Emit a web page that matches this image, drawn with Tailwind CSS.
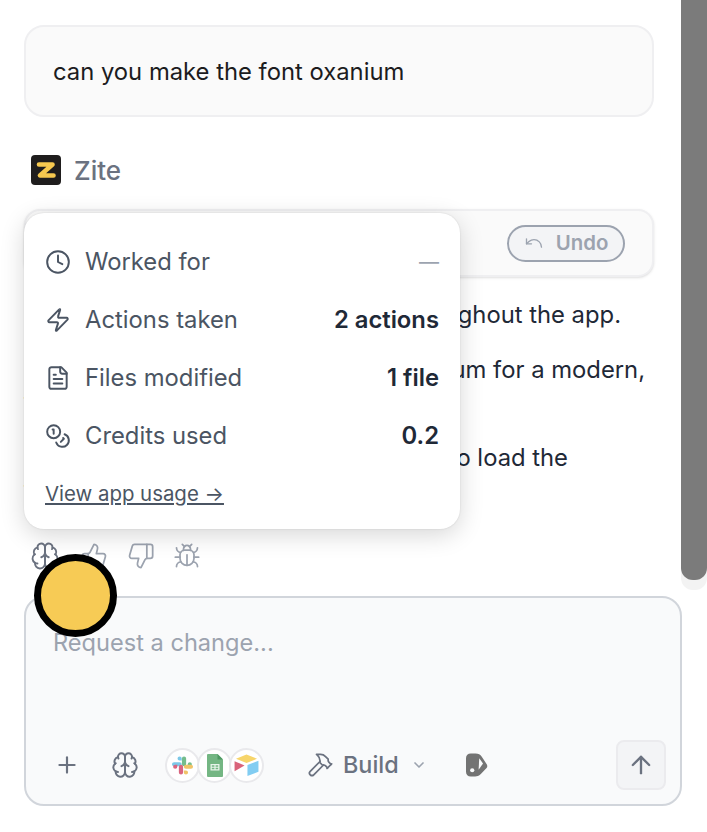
<!DOCTYPE html>
<html>
<head>
<meta charset="utf-8">
<script src="https://cdn.jsdelivr.net/npm/@tailwindcss/browser@4"></script>
</head>
<body class="bg-white">
<div class="relative h-[832px] w-[707px] overflow-hidden bg-white font-['Inter',sans-serif]">
  <!-- scrollbar -->
  <div class="absolute right-0 top-0 h-[590px] w-[26px] rounded-b-[12px] bg-[#f3f3f3]">
    <div class="h-[580px] w-full rounded-b-[12px] bg-[#7b7b7b]"></div>
  </div>

  <div class="flex flex-col pl-[24px] pt-[25px]">
    <div class="flex h-[92px] w-[630px] items-center rounded-[20px] border-2 border-[#efeff1] bg-[#fafafa] px-[27px] pt-[2px] text-[23.8px] text-[#1c1c1e]">can you make the font oxanium</div>

    <div class="mt-[38px] flex h-[30px] items-center gap-[13px] pl-[7px]">
      <svg width="30" height="30" viewBox="0 0 30 30"><rect width="30" height="30" rx="4" fill="#1f1d1d"/><path d="M8 9.500h13.500L9 20.500h13.500" fill="none" stroke="#f7c94f" stroke-width="4.600" stroke-linecap="round" stroke-linejoin="round"/></svg>
      <span class="text-[26px] font-medium text-[#6b7280]">Zite</span>
    </div>

    <div class="mt-[24px] flex h-[68px] w-[630px] items-center justify-end rounded-[16px] border-2 border-[#efeff1] bg-[#fafafa] pr-[27px] shadow-sm">
      <div class="flex h-[37px] w-[118px] items-center justify-center gap-[12px] rounded-full border-2 border-[#9ca3af] bg-[#f3f4f6] text-[20.4px] font-semibold text-[#9ca3af]">
        <svg width="20" height="20" viewBox="0 0 24 24" fill="none" stroke="#9ca3af" stroke-width="1.600" stroke-linecap="round" stroke-linejoin="round"><path d="M3 7v6h6"/><path d="M21 17a9 9 0 0 0-9-9 9 9 0 0 0-6 2.300L3 13"/></svg>
        <span>Undo</span>
      </div>
    </div>

    <div class="mt-[22px] h-[240px] whitespace-nowrap text-[23.8px] leading-[32px] text-[#1f2937]">
      <p class="w-[597px] text-right">Updated the font to Oxanium throughout the app.</p>
      <p class="mt-[23px] w-[621px] text-right">Changed the main font to Oxanium for a modern,</p>
      <p>tech look.</p>
      <p class="mt-[24px] w-[544px] text-right">Added the Google Fonts link to load the</p>
      <p>font.</p>
    </div>

    <div class="mt-[2px] flex h-[30px] items-center gap-[20px] pl-[6px] text-[#9ca3af]">
      <svg width="30" height="30" viewBox="0 0 24 24" fill="none" stroke="currentColor" stroke-width="1.500" stroke-linecap="round" stroke-linejoin="round" class="text-[#6b7280]"><path d="M12 5a3 3 0 1 0-5.997.125 4 4 0 0 0-2.526 5.770 4 4 0 0 0 .556 6.588A4 4 0 1 0 12 18Z"/><path d="M12 5a3 3 0 1 1 5.997.125 4 4 0 0 1 2.526 5.770 4 4 0 0 1-.556 6.588A4 4 0 1 1 12 18Z"/><path d="M15 13a4.500 4.500 0 0 1-3-4 4.500 4.500 0 0 1-3 4"/><path d="M17.599 6.500a3 3 0 0 0 .399-1.375"/><path d="M6.003 5.125A3 3 0 0 0 6.401 6.500"/><path d="M3.477 10.896a4 4 0 0 1 .585-.396"/><path d="M19.938 10.500a4 4 0 0 1 .585.396"/><path d="M6 18a4 4 0 0 1-1.967-.516"/><path d="M19.967 17.484A4 4 0 0 1 18 18"/></svg>
      <svg width="28" height="28" viewBox="0 0 24 24" fill="none" stroke="currentColor" stroke-width="1.500" stroke-linecap="round" stroke-linejoin="round"><path d="M7 10v12"/><path d="M15 5.880 14 10h5.830a2 2 0 0 1 1.920 2.560l-2.330 8A2 2 0 0 1 17.500 22H4a2 2 0 0 1-2-2v-8a2 2 0 0 1 2-2h2.760a2 2 0 0 0 1.790-1.110L12 2a3.130 3.130 0 0 1 3 3.880Z"/></svg>
      <svg width="28" height="28" viewBox="0 0 24 24" fill="none" stroke="currentColor" stroke-width="1.500" stroke-linecap="round" stroke-linejoin="round" class="ml-[-1px]"><path d="M17 14V2"/><path d="M9 18.120 10 14H4.170a2 2 0 0 1-1.920-2.560l2.330-8A2 2 0 0 1 6.500 2H20a2 2 0 0 1 2 2v8a2 2 0 0 1-2 2h-2.760a2 2 0 0 0-1.790 1.110L12 22a3.130 3.130 0 0 1-3-3.880Z"/></svg>
      <svg width="28" height="28" viewBox="0 0 24 24" fill="none" stroke="currentColor" stroke-width="1.500" stroke-linecap="round" stroke-linejoin="round" class="ml-[-2px]"><path d="m8 2 1.880 1.880"/><path d="M14.120 3.880 16 2"/><path d="M9 7.130v-1a3.003 3.003 0 1 1 6 0v1"/><path d="M12 20c-3.300 0-6-2.700-6-6v-3a4 4 0 0 1 4-4h4a4 4 0 0 1 4 4v3c0 3.300-2.700 6-6 6"/><path d="M12 20v-9"/><path d="M6.530 9C4.600 8.800 3 7.100 3 5"/><path d="M6 13H2"/><path d="M3 21c0-2.100 1.700-3.900 3.800-4"/><path d="M20.970 5c0 2.100-1.600 3.800-3.500 4"/><path d="M22 13h-4"/><path d="M17.200 17c2.100.1 3.800 1.900 3.800 4"/></svg>
    </div>

    <div class="mt-[25px] flex h-[210px] w-[658px] flex-col rounded-[20px] border-2 border-[#d1d5db] bg-[#f9fafb] pb-[14px] pl-[27px] pr-[14px] pt-[29px]">
      <div class="flex-1 text-[23.6px] leading-[32px] text-[#9ca3af]">Request a change...</div>
      <div class="flex items-center">
        <svg width="26" height="26" viewBox="0 0 24 24" fill="none" stroke="#6b7280" stroke-width="2" stroke-linecap="round" class="ml-[1px]"><path d="M5 12h14"/><path d="M12 5v14"/></svg>
        <svg width="28" height="28" viewBox="0 0 24 24" fill="none" stroke="#6b7280" stroke-width="1.700" stroke-linecap="round" stroke-linejoin="round" class="ml-[31px]"><path d="M12 5a3 3 0 1 0-5.997.125 4 4 0 0 0-2.526 5.770 4 4 0 0 0 .556 6.588A4 4 0 1 0 12 18Z"/><path d="M12 5a3 3 0 1 1 5.997.125 4 4 0 0 1 2.526 5.770 4 4 0 0 1-.556 6.588A4 4 0 1 1 12 18Z"/><path d="M15 13a4.500 4.500 0 0 1-3-4 4.500 4.500 0 0 1-3 4"/><path d="M17.599 6.500a3 3 0 0 0 .399-1.375"/><path d="M6.003 5.125A3 3 0 0 0 6.401 6.500"/><path d="M3.477 10.896a4 4 0 0 1 .585-.396"/><path d="M19.938 10.500a4 4 0 0 1 .585.396"/><path d="M6 18a4 4 0 0 1-1.967-.516"/><path d="M19.967 17.484A4 4 0 0 1 18 18"/></svg>
        <div class="ml-[26px] flex items-center">
          <div class="z-[1] flex h-[35px] w-[35px] items-center justify-center rounded-full border-2 border-[#e9e9ec] bg-white">
            <svg width="23" height="23" viewBox="0 0 24 24"><path d="M9 2.500a2.200 2.200 0 0 0 0 4.400h2.200V4.700A2.200 2.200 0 0 0 9 2.500zM9 8.500H3.200a2.200 2.200 0 0 0 0 4.400H9a2.200 2.200 0 0 0 0-4.400z" fill="#7cc8e8"/><path d="M21.800 10.700a2.200 2.200 0 0 0-4.400 0v2.200h2.200a2.200 2.200 0 0 0 2.200-2.200zM15.800 10.700V4.700a2.200 2.200 0 0 0-4.400 0v6a2.200 2.200 0 0 0 4.400 0z" fill="#74bd8c"/><path d="M15.600 21.500a2.200 2.200 0 0 0 0-4.400h-2.200v2.200a2.200 2.200 0 0 0 2.200 2.200zM15.600 15.500h5.200a2.200 2.200 0 0 0 0-4.400h-5.200a2.200 2.200 0 0 0 0 4.400z" fill="#f0c468"/><path d="M2.200 13.300a2.200 2.200 0 0 0 4.400 0v-2.200H4.400a2.200 2.200 0 0 0-2.200 2.200zM8.200 13.300v6a2.200 2.200 0 0 0 4.400 0v-6a2.200 2.200 0 0 0-4.400 0z" fill="#d9657f"/></svg>
          </div>
          <div class="z-[2] ml-[-3px] flex h-[35px] w-[35px] items-center justify-center rounded-full border-2 border-[#e9e9ec] bg-white">
            <svg width="16" height="23" viewBox="0 0 16 23"><path d="M1 0h9.500L16 5.500V22a1 1 0 0 1-1 1H1a1 1 0 0 1-1-1V1a1 1 0 0 1 1-1z" fill="#74b683"/><path d="M10.500 0 16 5.500h-5.500z" fill="#4f9a63"/><path d="M3.500 10h9v6.500h-9zM4.800 11.300v1.400h2.600v-1.400zM8.600 11.300v1.400h2.600v-1.400zM4.800 13.800v1.400h2.600v-1.400zM8.600 13.800v1.400h2.600v-1.400z" fill-rule="evenodd" fill="#e8f4ea"/></svg>
          </div>
          <div class="z-[3] ml-[-3px] flex h-[35px] w-[35px] items-center justify-center rounded-full border-2 border-[#e9e9ec] bg-white">
            <svg width="25" height="22" viewBox="0 0 26 23"><path d="M13 0.500 24 5 13 9.500 2 5z" fill="#f7d56a"/><path d="M14 11.500 25.500 7v11.500L14 23z" fill="#82cdf2"/><path d="M0.500 7.500 11 12 0.500 18z" fill="#d9637a"/></svg>
          </div>
        </div>
        <svg width="28" height="28" viewBox="0 0 24 24" fill="none" stroke="#6b7280" stroke-width="1.500" stroke-linecap="round" stroke-linejoin="round" class="ml-[42px]"><path d="m15 12-8.373 8.373a1 1 0 1 1-3-3L12 9"/><path d="m18 15 4-4"/><path d="m21.500 11.500-1.914-1.914A2 2 0 0 1 19 8.172V7l-2.260-2.260a6 6 0 0 0-4.202-1.756L9 2.960l.92.820A6.180 6.180 0 0 1 12 8.400V10l2 2h1.172a2 2 0 0 1 1.414.586L18.500 14.500"/></svg>
        <span class="ml-[9px] text-[23.4px] font-medium text-[#6b7280]">Build</span>
        <svg width="16" height="16" viewBox="0 0 24 24" fill="none" stroke="#9ca3af" stroke-width="2.500" stroke-linecap="round" stroke-linejoin="round" class="ml-[12px]"><path d="m6 9 6 6 6-6"/></svg>
        <svg width="22" height="24" viewBox="0 0 23 24" class="ml-[39px]"><path d="M5 0h5c3 0 5 1 6.500 3.500l5 7.500c1 1.500 1 3 0 4.200l-6 6.300c-2 2-4 2.500-6 2.500H5c-3 0-5-2-5-5V5c0-3 2-5 5-5z" fill="#737373"/><path d="M13.800 5 17.800 10.500 13.200 17z" fill="#f9fafb"/><circle cx="6.500" cy="17.500" r="2.200" fill="#f9fafb"/></svg>
        <div class="ml-auto flex h-[50px] w-[50px] items-center justify-center rounded-[8px] border-2 border-[#ebebee] bg-[#f3f4f6]">
          <svg width="28" height="28" viewBox="0 0 24 24" fill="none" stroke="#6b7280" stroke-width="2" stroke-linecap="round" stroke-linejoin="round"><path d="m5 12 7-7 7 7"/><path d="M12 19V5"/></svg>
        </div>
      </div>
    </div>
  </div>

  <!-- popover -->
  <div class="absolute left-[24px] top-[213px] flex h-[316px] w-[436px] flex-col rounded-[20px] bg-white pl-[21px] pr-[21px] pt-[33px] text-[23.8px] shadow-[0_6px_24px_rgba(0,0,0,0.16),0_0_2px_rgba(0,0,0,0.12)]">
    <div class="flex flex-col gap-[26px] text-[#4b5563]">
      <div class="flex h-[32px] items-center gap-[14px]">
        <svg width="26" height="26" viewBox="0 0 24 24" fill="none" stroke="#4b5563" stroke-width="1.800" stroke-linecap="round" stroke-linejoin="round"><circle cx="12" cy="12" r="10"/><path d="M12 6v6l4 2"/></svg>
        <span>Worked for</span>
        <span class="ml-auto text-[20px] text-[#9ca3af]">—</span>
      </div>
      <div class="flex h-[32px] items-center gap-[14px]">
        <svg width="26" height="26" viewBox="0 0 24 24" fill="none" stroke="#4b5563" stroke-width="1.800" stroke-linecap="round" stroke-linejoin="round"><path d="M4 14a1 1 0 0 1-.78-1.630l9.900-10.200a.5.5 0 0 1 .860.460l-1.920 6.020A1 1 0 0 0 13 10h7a1 1 0 0 1 .780 1.630l-9.900 10.200a.5.5 0 0 1-.860-.460l1.920-6.020A1 1 0 0 0 11 14z"/></svg>
        <span>Actions taken</span>
        <span class="ml-auto font-semibold text-[#1f2937]">2 actions</span>
      </div>
      <div class="flex h-[32px] items-center gap-[14px]">
        <svg width="26" height="26" viewBox="0 0 24 24" fill="none" stroke="#4b5563" stroke-width="1.800" stroke-linecap="round" stroke-linejoin="round"><path d="M15 2H6a2 2 0 0 0-2 2v16a2 2 0 0 0 2 2h12a2 2 0 0 0 2-2V7Z"/><path d="M14 2v4a2 2 0 0 0 2 2h4"/><path d="M10 9H8"/><path d="M16 13H8"/><path d="M16 17H8"/></svg>
        <span>Files modified</span>
        <span class="ml-auto font-semibold text-[#1f2937]">1 file</span>
      </div>
      <div class="flex h-[32px] items-center gap-[14px]">
        <svg width="26" height="26" viewBox="0 0 24 24" fill="none" stroke="#4b5563" stroke-width="1.800" stroke-linecap="round" stroke-linejoin="round"><circle cx="8" cy="8" r="6"/><path d="M18.090 10.370A6 6 0 1 1 10.340 18"/><path d="M7 6h1v4"/><path d="m16.710 13.880.7.710-2.820 2.820"/></svg>
        <span>Credits used</span>
        <span class="ml-auto font-semibold text-[#1f2937]">0.2</span>
      </div>
    </div>
    <div class="mt-[28px] text-[20.4px] leading-[28px] text-[#4b5563] underline">View app usage →</div>
  </div>

  <!-- yellow cursor dot -->
  <div class="absolute left-[34px] top-[554px] h-[83px] w-[83px] rounded-full border-[7px] border-black bg-[#f7cb55]"></div>
</div>
</body>
</html>
